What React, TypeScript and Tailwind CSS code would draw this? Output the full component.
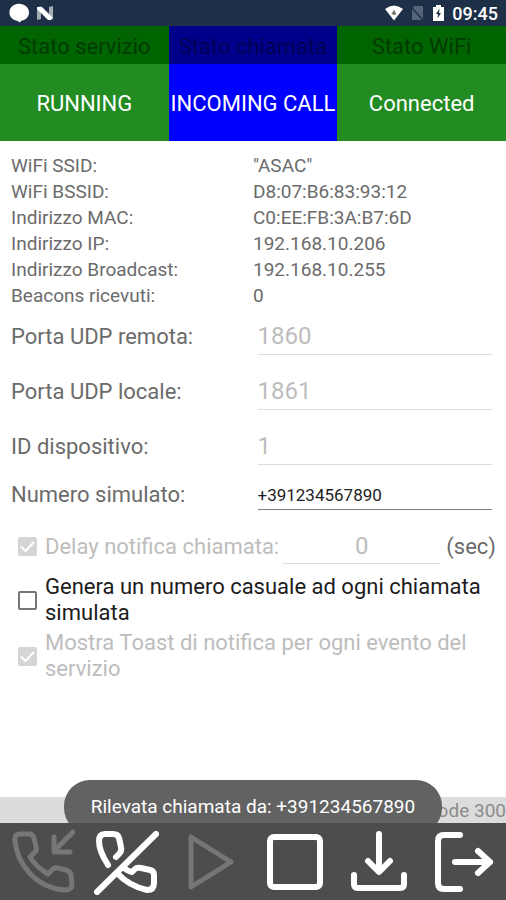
import { useState } from "react";
import type { ReactNode } from "react";

type Tone = "green" | "blue";

const statuses: { title: string; value: string; tone: Tone }[] = [
  { title: "Stato servizio", value: "RUNNING", tone: "green" },
  { title: "Stato chiamata", value: "INCOMING CALL", tone: "blue" },
  { title: "Stato WiFi", value: "Connected", tone: "green" },
];

const details = [
  ["WiFi SSID:", '"ASAC"'],
  ["WiFi BSSID:", "D8:07:B6:83:93:12"],
  ["Indirizzo MAC:", "C0:EE:FB:3A:B7:6D"],
  ["Indirizzo IP:", "192.168.10.206"],
  ["Indirizzo Broadcast:", "192.168.10.255"],
  ["Beacons ricevuti:", "0"],
];

const fields = [
  { id: "remote", label: "Porta UDP remota:", value: "1860" },
  { id: "local", label: "Porta UDP locale:", value: "1861" },
  { id: "device", label: "ID dispositivo:", value: "1" },
];

function StatusBar() {
  return (
    <header className="flex h-[26px] items-center justify-between bg-[#1d3048] px-2 text-white">
      <div className="flex items-center gap-1.5">
        <svg width="22" height="20" viewBox="0 0 22 20" fill="currentColor" aria-hidden="true">
          <path d="M11 .8C6 .6 1.400 4.500 1.400 9.600c0 4.500 3.800 7.900 8.300 8.400l2.300 1.600 1-1.800c5-.8 8-4.200 8-8.400C21 4.600 16.500 .9 11 .8Z" />
        </svg>
        <svg width="18" height="16" viewBox="0 0 18 16" fill="currentColor" aria-hidden="true">
          <path d="M1 2.500 5 1v13l-4 1ZM13 2l4-1v12.500l-4 1Z" opacity=".6" />
          <path d="M1 2h5l11 11-2 2h-3L1 4Z" />
        </svg>
      </div>
      <div className="flex items-center">
        <svg width="18" height="16" viewBox="0 0 18 16" aria-hidden="true">
          <path d="M0 4Q9-3 18 4L9 15.500Z" fill="#fff" />
          <path d="M6.500 9 9 4.500 11.500 9 9 10Z" fill="#777" />
        </svg>
        <svg className="ml-2" width="12" height="14" viewBox="0 0 12 14" aria-hidden="true">
          <path d="M3 0h9v14H1V3Z" fill="#56657a" />
          <path d="m0 1 12 13" stroke="#1d3048" strokeWidth="1.500" />
        </svg>
        <svg className="ml-2.5" width="11" height="16" viewBox="0 0 11 16" aria-hidden="true">
          <path d="M3 0h5v2h3v14H0V2h3Z" fill="#fff" />
          <path d="M6.500 3.500 3 9h2l-.5 4.500L8 8H6Z" fill="#1d3048" />
        </svg>
        <time className="ml-2 pt-0.5 text-lg font-medium">09:45</time>
      </div>
    </header>
  );
}

function StatusTile({ title, value, tone }: { title: string; value: string; tone: Tone }) {
  const blue = tone === "blue";
  return (
    <section className="text-center whitespace-nowrap">
      <h2 className={`h-[38px] text-[22px] leading-[42px] ${blue ? "bg-[#00008b] text-[#000054]" : "bg-[#006400] text-[#003c00]"}`}>{title}</h2>
      <p className={`h-[77px] text-[22px] leading-20 text-white ${blue ? "bg-[#0000ff]" : "bg-[#228b22]"}`}>{value}</p>
    </section>
  );
}

function CheckBox({ id, checked, disabled, onChange }: { id: string; checked: boolean; disabled?: boolean; onChange?: () => void }) {
  return (
    <span className="grid w-[19px] shrink-0">
      <input
        id={id}
        type="checkbox"
        checked={checked}
        disabled={disabled}
        onChange={onChange}
        className="col-start-1 row-start-1 size-[19px] appearance-none rounded-xs border-2 border-[#757575] disabled:border-[#d5d5d5] disabled:bg-[#d5d5d5]"
      />
      {checked && (
        <svg className="pointer-events-none col-start-1 row-start-1" width="19" height="19" viewBox="0 0 19 19" fill="none" stroke="#fff" strokeWidth="2" aria-hidden="true">
          <path d="m3 9.500 4.500 4.500L16 5" />
        </svg>
      )}
    </span>
  );
}

function ToolButton({ label, disabled, children }: { label: string; disabled?: boolean; children: ReactNode }) {
  return (
    <button type="button" aria-label={label} disabled={disabled} className="flex items-center justify-center text-white disabled:text-[#767676]">
      <svg width="66" height="66" viewBox="0 0 66 66" fill="none" stroke="currentColor" strokeWidth="6" strokeLinecap="round" strokeLinejoin="round" aria-hidden="true">
        {children}
      </svg>
    </button>
  );
}

export default function App() {
  const [random, setRandom] = useState(false);
  const [number, setNumber] = useState("+391234567890");

  return (
    <div className="relative flex min-h-screen flex-col bg-white font-[Roboto,sans-serif] text-[#6b6b6b]">
      <StatusBar />
      <div className="grid grid-cols-3">
        {statuses.map((s) => (
          <StatusTile key={s.title} {...s} />
        ))}
      </div>

      <main className="flex-1">
        <dl className="mt-3 px-[11px] text-[19px] leading-[26px]">
          {details.map(([name, value]) => (
            <div key={name} className="grid grid-cols-2">
              <dt>{name}</dt>
              <dd>{value}</dd>
            </div>
          ))}
        </dl>

        <form className="pl-[11px] text-[22px]">
          {fields.map((f) => (
            <div key={f.id} className="grid h-[55px] grid-cols-2 items-center pr-3.5">
              <label htmlFor={f.id}>{f.label}</label>
              <input id={f.id} disabled defaultValue={f.value} className="ml-1.5 h-9 min-w-0 border-b border-[#dcdcdc] text-2xl text-[#bdbdbd]" />
            </div>
          ))}
          <div className="grid h-10 grid-cols-2 items-center pr-3.5">
            <label htmlFor="number">Numero simulato:</label>
            <input id="number" value={number} onChange={(e) => setNumber(e.target.value)} className="ml-1.5 h-8 min-w-0 border-b border-[#808080] pt-0.5 text-[17px] text-[#222]" />
          </div>

          <div className="mt-1 flex h-14 items-center pr-2.5 pl-[7px]">
            <CheckBox id="delay" checked disabled />
            <label htmlFor="delay" className="ml-2 whitespace-nowrap text-[#bdbdbd]">Delay notifica chiamata:</label>
            <input aria-label="Secondi di delay" disabled defaultValue="0" className="ml-1 h-9 min-w-0 flex-1 border-b border-[#dcdcdc] text-center text-2xl text-[#bdbdbd]" />
            <span className="ml-1.5">(sec)</span>
          </div>
          <div className="flex items-center pr-5 pl-[7px] leading-[26px] text-[#1c1c1c]">
            <CheckBox id="random" checked={random} onChange={() => setRandom(!random)} />
            <label htmlFor="random" className="ml-2">Genera un numero casuale ad ogni chiamata simulata</label>
          </div>
          <div className="mt-1 flex items-center pr-5 pl-[7px] leading-[26px] text-[#bdbdbd]">
            <CheckBox id="toast" checked disabled />
            <label htmlFor="toast" className="ml-2">Mostra Toast di notifica per ogni evento del servizio</label>
          </div>
        </form>
      </main>

      <p className="h-[26px] bg-[#dcdcdc] text-right text-[19px] leading-[28px] whitespace-nowrap text-[#8c8c8c]">code 300</p>
      <nav aria-label="Comandi" className="z-10 grid h-[77px] grid-cols-6 bg-[#4d4d4d]">
        <ToolButton label="Simula chiamata" disabled>
          <path d="M6 12Q5 5 11 5h9q4 0 5 4l2 9q1 4-2 6l-4 4q6 10 18 17l5-5q2-2 5-1l8 2q4 1 5 5l1 9q0 6-7 6C26 59 8 34 6 12ZM64 3 46 21M45 8v15h16" strokeWidth="5" />
        </ToolButton>
        <ToolButton label="Termina chiamata">
          <path d="M4 63 63 5" />
          <path d="M15 36Q6 22 6 12q0-7 6-7h8q5 0 6 4l2 9q1 4-2 7l-3 3M24 44q12 13 30 17 7 0 7-7v-8q0-4-4-5l-9-2q-4-1-6 1l-3 3q-5-1-9-5" />
        </ToolButton>
        <ToolButton label="Avvia" disabled>
          <path d="M13 8v50l40-25Z" strokeWidth="5" />
        </ToolButton>
        <ToolButton label="Ferma">
          <rect x="8" y="8" width="50" height="50" rx="4" />
        </ToolButton>
        <ToolButton label="Scarica">
          <path d="M33 5v37M22 32l11 11 11-11M8 46v9q0 4 4 4h42q4 0 4-4v-9" />
        </ToolButton>
        <ToolButton label="Esci">
          <path d="M29 6H13q-6 0-6 6v42q0 6 6 6h16M24 33h35M47 22l12 11-12 11" />
        </ToolButton>
      </nav>

      <div role="status" className="absolute bottom-[66px] left-1/2 flex h-[54px] w-[378px] -translate-x-1/2 items-center justify-center rounded-[26px] bg-[#626262] text-[19px] text-white">
        Rilevata chiamata da: +391234567890
      </div>
    </div>
  );
}
